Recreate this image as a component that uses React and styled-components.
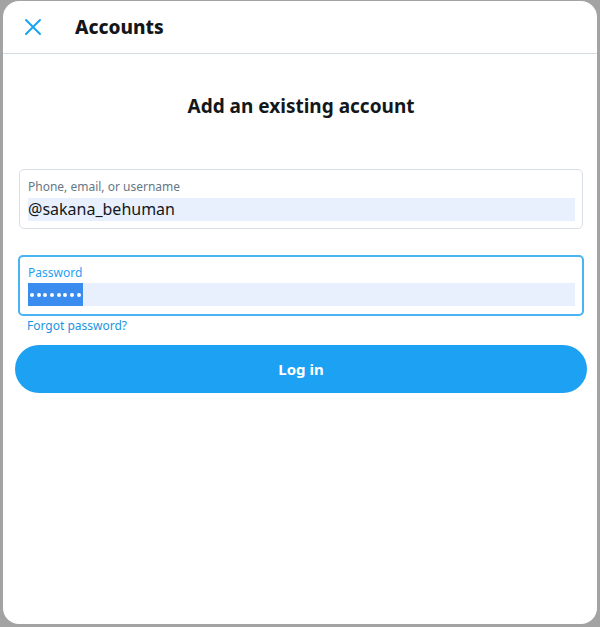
import React from "react";
import styled, { createGlobalStyle } from "styled-components";

const Global = createGlobalStyle`
  html, body { margin: 0; padding: 0; }
  body {
    background: #a3a3a3;
    font-family: "Noto Sans", "Open Sans", "Liberation Sans", sans-serif;
    width: 600px;
    height: 627px;
    overflow: hidden;
  }
`;

const Backdrop = styled.div`
  width: 600px;
  height: 627px;
  padding: 1px 3px 3px 3px;
  box-sizing: border-box;
  display: flex;
`;

const Modal = styled.div`
  flex: 1;
  background: #fff;
  border-radius: 16px;
  display: flex;
  flex-direction: column;
  overflow: hidden;
`;

const Header = styled.div`
  height: 52px;
  border-bottom: 1px solid #d3dde5;
  display: flex;
  align-items: center;
  padding-left: 19px;
  gap: 31px;
  flex-shrink: 0;
`;

const CloseButton = styled.button`
  width: 22px;
  height: 22px;
  border: none;
  background: transparent;
  padding: 0;
  display: flex;
  align-items: center;
  justify-content: center;
  color: #1da1f2;
`;

const HeaderTitle = styled.h2`
  margin: 0;
  font-size: 19px;
  font-weight: 800;
  color: #14171a;
`;

const Body = styled.div`
  padding: 0 10px 0 12px;
  display: flex;
  flex-direction: column;
`;

const Title = styled.h1`
  margin: 38px 0 0;
  text-align: center;
  font-size: 19px;
  font-weight: 700;
  color: #14171a;
  line-height: 28px;
`;

const Field = styled.div`
  margin: ${(p) => p.$mt}px ${(p) => (p.$focused ? 3 : 4)}px 0;
  border: ${(p) => (p.$focused ? "2px solid #4ab3f4" : "1px solid #d8dee4")};
  border-radius: 5px;
  padding: ${(p) => (p.$focused ? "8px 7px 8px 8px" : "9px 7px 7px 8px")};
  display: flex;
  flex-direction: column;
`;

const Label = styled.label`
  font-size: 12px;
  line-height: 16px;
  color: ${(p) => (p.$focused ? "#1da1f2" : "#657786")};
`;

const Value = styled.div`
  margin-top: ${(p) => (p.$focused ? 2 : 3)}px;
  height: 23px;
  background: #e8f0fe;
  font-size: 16px;
  line-height: 23px;
  color: #14171a;
  display: flex;
  align-items: center;
`;

const Selected = styled.span`
  background: #3b8cef;
  height: 23px;
  padding: 0 2px 0 2px;
  display: flex;
  align-items: center;
  gap: 2.7px;
`;

const Dot = styled.span`
  width: 4px;
  height: 4px;
  border-radius: 50%;
  background: #fff;
`;

const Forgot = styled.a`
  margin: 2px 0 0 12px;
  font-size: 12px;
  line-height: 16px;
  color: #1b95e0;
  text-decoration: none;
`;

const LoginButton = styled.button`
  margin: 11px 0 0;
  height: 48px;
  border: none;
  border-radius: 24px;
  background: #1da1f2;
  color: #fff;
  font-family: inherit;
  font-size: 15px;
  font-weight: 700;
`;

export default function App() {
  return (
    <>
      <Global />
      <Backdrop>
        <Modal>
          <Header>
            <CloseButton aria-label="Close">
              <svg width="18" height="18" viewBox="0 0 18 18">
                <path d="M2 2 L16 16 M16 2 L2 16" stroke="currentColor" strokeWidth="2" strokeLinecap="round" />
              </svg>
            </CloseButton>
            <HeaderTitle>Accounts</HeaderTitle>
          </Header>
          <Body>
            <Title>Add an existing account</Title>
            <Field $mt={49}>
              <Label>Phone, email, or username</Label>
              <Value>@sakana_behuman</Value>
            </Field>
            <Field $mt={26} $focused>
              <Label $focused>Password</Label>
              <Value $focused>
                <Selected>
                  {Array.from({ length: 8 }, (_, i) => (
                    <Dot key={i} />
                  ))}
                </Selected>
              </Value>
            </Field>
            <Forgot href="#">Forgot password?</Forgot>
            <LoginButton>Log in</LoginButton>
          </Body>
        </Modal>
      </Backdrop>
    </>
  );
}
